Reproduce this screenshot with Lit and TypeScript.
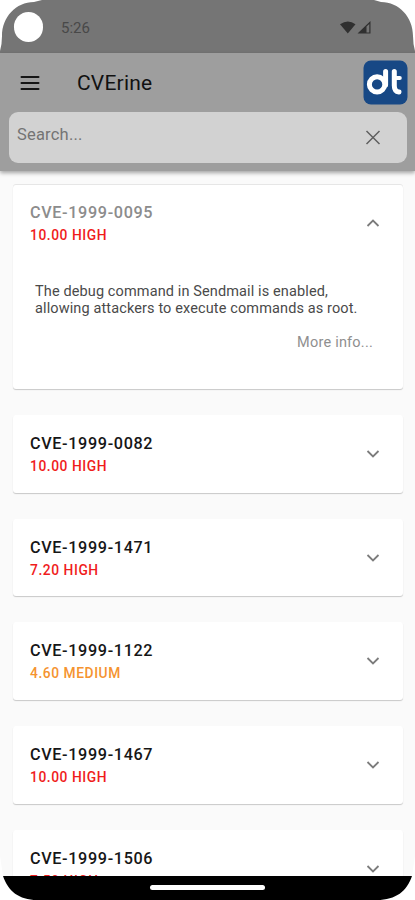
import { LitElement, html, css, nothing } from "lit";
import { customElement, property } from "lit/decorators.js";

interface Cve {
  id: string;
  score: string;
  level: "high" | "medium";
  text?: string;
}

const ENTRIES: Cve[] = [
  {
    id: "CVE-1999-0095",
    score: "10.00 HIGH",
    level: "high",
    text: "The debug command in Sendmail is enabled, allowing attackers to execute commands as root.",
  },
  { id: "CVE-1999-0082", score: "10.00 HIGH", level: "high" },
  { id: "CVE-1999-1471", score: "7.20 HIGH", level: "high" },
  { id: "CVE-1999-1122", score: "4.60 MEDIUM", level: "medium" },
  { id: "CVE-1999-1467", score: "10.00 HIGH", level: "high" },
  { id: "CVE-1999-1506", score: "7.50 HIGH", level: "high" },
];

@customElement("cve-card")
export class CveCard extends LitElement {
  @property({ attribute: false }) entry!: Cve;

  static styles = css`
    :host {
      display: block;
      flex: none;
      box-sizing: border-box;
      height: 77.7px;
      background: #fff;
      border-radius: 3px;
      box-shadow: 0 1px 1px rgba(0, 0, 0, 0.2);
    }
    :host([open]) {
      height: 204px;
      box-shadow: 0 1px 1px rgba(0, 0, 0, 0.2), 0 -1px 0 rgba(0, 0, 0, 0.08);
    }
    .head {
      display: flex;
      align-items: center;
      height: 77.7px;
      box-sizing: border-box;
      padding: 0 22px 0 17px;
    }
    .labels {
      flex: 1;
      padding-top: 2px;
    }
    .id {
      font-size: 16.2px;
      line-height: 22px;
      font-weight: 500;
      color: #161616;
      letter-spacing: 0.65px;
    }
    :host([open]) .id {
      color: #8c8c8c;
    }
    .score {
      font-size: 13.8px;
      line-height: 22px;
      font-weight: 500;
      letter-spacing: 0.56px;
    }
    .high {
      color: #f01c1c;
    }
    .medium {
      color: #f59330;
    }
    .chevron {
      display: block;
      width: 16px;
      height: 16px;
      fill: none;
      stroke: #7c7c7c;
      stroke-width: 1.8;
    }
    .body {
      padding: 21px 30px 0 22px;
      font-size: 14.5px;
      line-height: 17px;
      letter-spacing: 0.12px;
      color: #4a4a4a;
    }
    .text {
      width: 335px;
    }
    .more {
      margin-top: 17px;
      text-align: right;
      letter-spacing: 0.22px;
      color: #8f8f8f;
    }
  `;

  render() {
    const { id, score, level, text } = this.entry;
    return html`
      <div class="head">
        <div class="labels">
          <div class="id">${id}</div>
          <div class="score ${level}">${score}</div>
        </div>
        <svg class="chevron" viewBox="0 0 16 16">
          <path d=${text ? "M2.5 11 8 5.5 13.5 11" : "M2.5 5 8 10.5 13.5 5"} />
        </svg>
      </div>
      ${text
        ? html`<div class="body">
            <div class="text">${text}</div>
            <div class="more">More info...</div>
          </div>`
        : nothing}
    `;
  }
}

@customElement("app-root")
export class AppRoot extends LitElement {
  static styles = css`
    :host {
      display: block;
      width: 415px;
      height: 900px;
      background: #fff;
      font-family: Roboto, sans-serif;
    }
    .device {
      display: flex;
      flex-direction: column;
      height: 900px;
      overflow: hidden;
      background: #fafafa;
      clip-path: path(
        "M0 51Q2 44 2 36C2 17 16 2 34 2L42 0H374L381 2C399 2 413 17 413 36Q413 44 415 51V856L412 876C407 891 396 900 377 900H37C19 900 8 891 3 876L0 856Z"
      );
    }
    .status {
      flex: none;
      display: flex;
      align-items: center;
      height: 53px;
      box-sizing: border-box;
      padding: 2px 43px 0 13.5px;
      background: #757575;
    }
    .camera {
      width: 29.5px;
      height: 29.5px;
      margin-top: -1px;
      border-radius: 50%;
      background: #fff;
    }
    .time {
      flex: 1;
      margin-left: 18px;
      font-size: 15px;
      color: #484848;
    }
    .signals {
      width: 32px;
      height: 16px;
      fill: #303030;
    }
    .bar {
      flex: none;
      height: 118px;
      background: #9e9e9e;
      box-shadow: 0 2px 4px rgba(0, 0, 0, 0.35);
      z-index: 1;
    }
    .title-row {
      display: flex;
      align-items: center;
      height: 59px;
      padding: 0 7px 0 20px;
    }
    .menu {
      width: 20px;
      height: 16px;
      stroke: #161616;
      stroke-width: 2;
      stroke-linecap: round;
    }
    .title {
      flex: 1;
      margin-left: 37px;
      font-size: 21px;
      color: #111;
      letter-spacing: 0.2px;
    }
    .logo {
      width: 45px;
      height: 45px;
    }
    .search {
      display: flex;
      align-items: center;
      justify-content: space-between;
      height: 51px;
      box-sizing: border-box;
      margin: 0 8px 0 9px;
      padding: 0 26px 0 8px;
      background: #d2d2d2;
      border-radius: 9px;
    }
    .placeholder {
      margin-top: -6px;
      font-size: 16.5px;
      letter-spacing: 0.2px;
      color: #747474;
    }
    .close {
      width: 16px;
      height: 16px;
      stroke: #606060;
      stroke-width: 1.5;
    }
    .list {
      flex: 1;
      min-height: 0;
      overflow: hidden;
      display: flex;
      flex-direction: column;
      gap: 26px;
      padding: 13.5px 12px 0 13px;
    }
    .list cve-card[open] {
      margin-bottom: 0.5px;
    }
    .nav {
      flex: none;
      display: flex;
      justify-content: center;
      height: 24px;
      background: #000;
    }
    .handle {
      width: 115px;
      height: 5px;
      margin-top: 9px;
      border-radius: 3px;
      background: #fff;
    }
  `;

  render() {
    return html`
      <div class="device">
        <div class="status">
          <div class="camera"></div>
          <div class="time">5:26</div>
          <svg class="signals" viewBox="0 0 32 16">
            <path d="M0 4.2Q8-1.2 15.5 4.2L7.8 13.5Z" />
            <path fill-rule="evenodd" d="M17.5 13.5 30.5 1V13.5ZM26.5 6.5V12.5H29.3V4Z" />
          </svg>
        </div>
        <div class="bar">
          <div class="title-row">
            <svg class="menu" viewBox="0 0 20 16">
              <path d="M1.5 2H18.5M1.5 8H18.5M1.5 14H18.5" />
            </svg>
            <div class="title">CVErine</div>
            <svg class="logo" viewBox="0 0 45 45">
              <rect x=".5" y=".5" width="44" height="44" rx="7.5" fill="#174885" />
              <g fill="none" stroke="#fff" stroke-width="5" stroke-linecap="round">
                <circle cx="14.1" cy="24.4" r="7.7" />
                <path d="M22.6 11.5V25M31.3 11.5V25.5Q31.3 31.5 36 32" />
                <path d="M31.3 18H36.8" stroke-width="4" />
              </g>
            </svg>
          </div>
          <div class="search">
            <span class="placeholder">Search...</span>
            <svg class="close" viewBox="0 0 16 16">
              <path d="M1.5 1 14.5 14M14.5 1 1.5 14" />
            </svg>
          </div>
        </div>
        <div class="list">
          ${ENTRIES.map((e) => html`<cve-card .entry=${e} ?open=${!!e.text}></cve-card>`)}
        </div>
        <div class="nav"><div class="handle"></div></div>
      </div>
    `;
  }
}
